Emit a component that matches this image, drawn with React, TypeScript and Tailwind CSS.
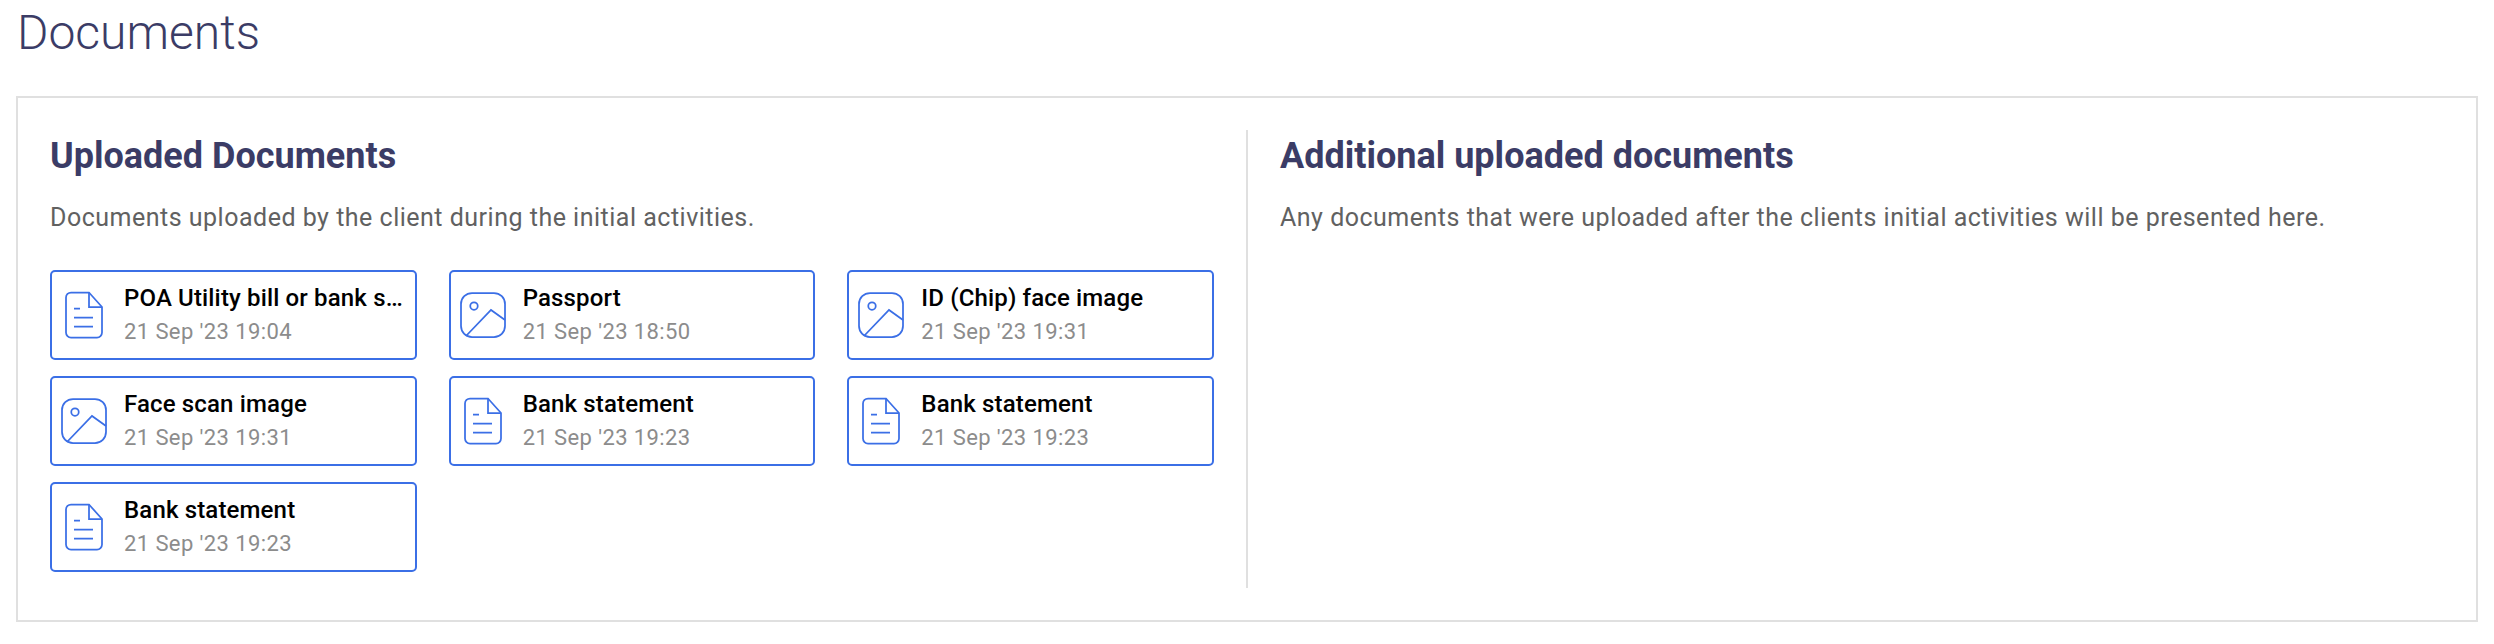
const uploaded = [
  { name: "POA Utility bill or bank statement", date: "21 Sep '23 19:04", kind: "file" },
  { name: "Passport", date: "21 Sep '23 18:50", kind: "image" },
  { name: "ID (Chip) face image", date: "21 Sep '23 19:31", kind: "image" },
  { name: "Face scan image", date: "21 Sep '23 19:31", kind: "image" },
  { name: "Bank statement", date: "21 Sep '23 19:23", kind: "file" },
  { name: "Bank statement", date: "21 Sep '23 19:23", kind: "file" },
  { name: "Bank statement", date: "21 Sep '23 19:23", kind: "file" },
];

function FileIcon() {
  return (
    <svg width="38" height="48" viewBox="0 0 38 48" fill="none" stroke="#3b6fe6" strokeWidth="1.750" className="shrink-0">
      <path d="M6 1.500h18l13 14.500v25.500a5 5 0 0 1-5 5h-26a5 5 0 0 1-5-5v-35a5 5 0 0 1 5-5z" />
      <path d="M24 1.500v14.500h13" />
      <path d="M9 17.500h6M9 26.500h19M9 35.500h19" />
    </svg>
  );
}

function ImageIcon() {
  return (
    <svg width="46" height="46" viewBox="0 0 46 46" fill="none" stroke="#3b6fe6" strokeWidth="1.750" className="shrink-0">
      <rect x="1" y="1" width="44" height="44" rx="11" />
      <circle cx="14" cy="14" r="3.750" />
      <path d="M6 44l25-26 14 10" />
    </svg>
  );
}

function DocCard({ name, date, kind }: { name: string; date: string; kind: string }) {
  return (
    <div className="flex h-[90px] min-w-0 items-center rounded-[5px] border-2 border-[#3b6fe6] bg-white pl-[9px] pr-[8px]">
      <div className="flex w-[46px] shrink-0 justify-center">
        {kind === "file" ? <FileIcon /> : <ImageIcon />}
      </div>
      <div className="ml-[17px] min-w-0 flex-1">
        <p className="truncate text-[24px] leading-[32px] font-medium tracking-[0.150px] text-black">{name}</p>
        <p className="mt-[2px] text-[22px] leading-[32px] tracking-[0.400px] text-[#8c8c8c]">{date}</p>
      </div>
    </div>
  );
}

export default function App() {
  return (
    <div className="min-h-[644px] bg-white px-4 font-['Roboto',sans-serif]">
      <h1 className="pt-[4px] pl-[1px] text-[48px] leading-[58px] font-light text-[#3b3c66]">Documents</h1>
      <div className="mt-[34px] flex h-[526px] border-2 border-[#e0e0e0] p-[32px]">
        <section className="w-[1198px] shrink-0 border-r-2 border-[#e0e0e0] pr-[32px]">
          <h2 className="pt-[4px] text-[36px] leading-[44px] font-bold text-[#3b3c66]">Uploaded Documents</h2>
          <p className="mt-[24px] text-[25px] leading-[32px] tracking-[0.500px] text-[#616161]">
            Documents uploaded by the client during the initial activities.
          </p>
          <div className="mt-[36px] grid grid-cols-3 gap-x-[32px] gap-y-[16px]">
            {uploaded.map((doc, i) => (
              <DocCard key={i} name={doc.name} date={doc.date} kind={doc.kind} />
            ))}
          </div>
        </section>
        <section className="pl-[32px]">
          <h2 className="pt-[4px] text-[36px] leading-[44px] font-bold text-[#3b3c66]">Additional uploaded documents</h2>
          <p className="mt-[24px] text-[25px] leading-[32px] tracking-[0.500px] text-[#616161]">
            Any documents that were uploaded after the clients initial activities will be presented here.
          </p>
        </section>
      </div>
    </div>
  );
}
